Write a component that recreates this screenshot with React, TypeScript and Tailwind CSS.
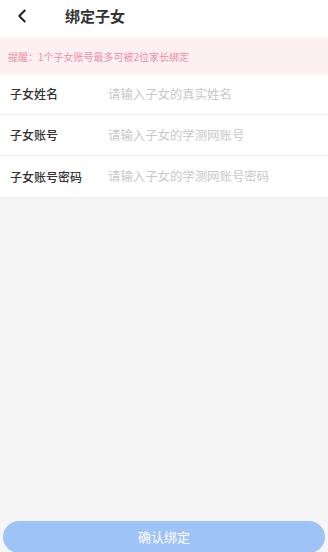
import { ChevronLeft } from "lucide-react";

const FIELDS = [
  { label: "子女姓名", placeholder: "请输入子女的真实姓名", type: "text" },
  { label: "子女账号", placeholder: "请输入子女的学测网账号", type: "text" },
  { label: "子女账号密码", placeholder: "请输入子女的学测网账号密码", type: "password" },
];

export default function App() {
  return (
    <div
      className="flex h-[552px] flex-col overflow-hidden bg-[#f5f5f5]"
      style={{ fontFamily: '"Noto Sans CJK SC", "Noto Sans", sans-serif' }}
    >
      <div className="flex h-[38px] items-center bg-white pb-[6px]">
        <button className="flex w-[44px] items-center justify-center text-[#222]">
          <ChevronLeft size={22} strokeWidth={2.2} />
        </button>
        <h1 className="ml-[21px] text-[15px] font-bold text-[#333]">绑定子女</h1>
      </div>

      <div className="flex h-[36px] items-center bg-[#fdf0f2] px-2 text-[10px] text-[#ec8ea4]">
        提醒：1个子女账号最多可被2位家长绑定
      </div>

      <div className="bg-white">
        {FIELDS.map((f, i) => (
          <div
            key={f.label}
            className={`flex h-[41px] items-center ${i < FIELDS.length - 1 ? "border-b border-[#f0f0f0]" : ""}`}
          >
            <span className="w-[108px] shrink-0 pl-[10px] text-[12px] font-medium text-[#333]">
              {f.label}
            </span>
            <input
              type={f.type}
              placeholder={f.placeholder}
              className="min-w-0 flex-1 bg-transparent text-[12.4px] text-[#333] outline-none placeholder:text-[#c8c8c8]"
            />
          </div>
        ))}
      </div>

      <div className="flex flex-1 flex-col justify-end px-[3px]">
        <button className="mb-[-1px] h-[32px] w-full rounded-full bg-[#9fc3f6] text-[13px] text-white">
          确认绑定
        </button>
      </div>
    </div>
  );
}
